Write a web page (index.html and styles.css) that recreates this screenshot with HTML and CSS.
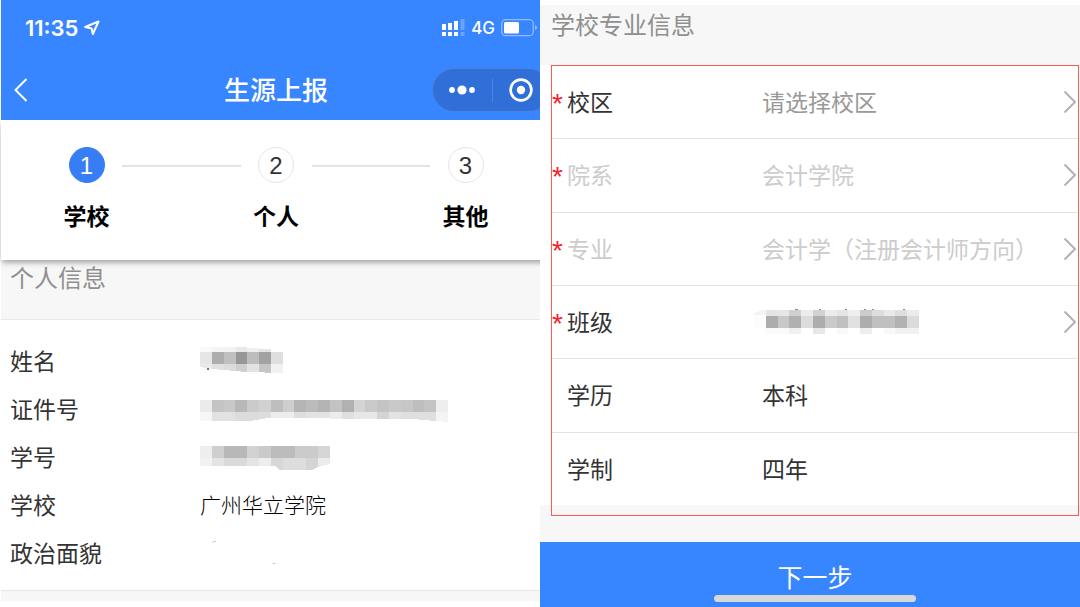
FILE: index.html
```html
<!DOCTYPE html>
<html lang="zh-CN">
<head>
    <meta charset="UTF-8">
    <meta name="viewport" content="width=device-width, initial-scale=1.0">
    <title>生源上报</title>
    <link rel="stylesheet" href="styles.css">
</head>
<body>
    <main class="panel panel-left">
        <div class="screen">
            <header class="topbar">
                <div class="status">
                    <span class="time">11:35</span>
                    <svg class="location" width="16" height="16" viewBox="0 0 16 16">
                        <path d="M1.2 7 L14.5 1.5 L8.8 14 L7.6 8.4 Z" fill="none" stroke="#fff" stroke-width="2" stroke-linejoin="round"/>
                    </svg>
                    <svg class="signal" width="23" height="18" viewBox="0 0 23 18" fill="#fff">
                        <rect x="0" y="5" width="4" height="6"/>
                        <rect x="6" y="4" width="4" height="7"/>
                        <rect x="12" y="2" width="4" height="9"/>
                        <rect x="0" y="13" width="4" height="4"/>
                        <rect x="6" y="13" width="4" height="4"/>
                        <rect x="12" y="13" width="4" height="4"/>
                        <path d="M18.5 0h4v11h-4zM18.5 13h4v4h-4z" opacity=".25"/>
                    </svg>
                    <span class="network">4G</span>
                    <svg class="battery" width="36" height="18" viewBox="0 0 36 18">
                        <rect x=".7" y=".7" width="31.6" height="16" rx="4" fill="none" stroke="#fff" stroke-opacity=".45" stroke-width="1.3"/>
                        <rect x="3" y="3" width="15" height="11.5" rx="1.5" fill="#fff"/>
                        <path d="M34 6q2 .5 2 2.5t-2 2.5z" fill="#fff" fill-opacity=".45"/>
                    </svg>
                </div>
                <nav class="navbar">
                    <button class="back" type="button" aria-label="返回">
                        <svg width="14" height="24" viewBox="0 0 14 24">
                            <path d="M12.5 1 L1.5 12 L12.5 23" fill="none" stroke="#fff" stroke-width="2"/>
                        </svg>
                    </button>
                    <h1>生源上报</h1>
                    <div class="capsule">
                        <button type="button" aria-label="更多">
                            <svg width="26" height="10" viewBox="0 0 26 10" fill="#fff">
                                <circle cx="3" cy="5" r="2.9"/>
                                <circle cx="13" cy="5" r="4.6"/>
                                <circle cx="23" cy="5" r="2.9"/>
                            </svg>
                        </button>
                        <button type="button" aria-label="关闭">
                            <svg width="24" height="24" viewBox="0 0 24 24">
                                <circle cx="12" cy="12" r="10.4" fill="none" stroke="#fff" stroke-width="2.6"/>
                                <circle cx="12" cy="12" r="4.2" fill="#fff"/>
                            </svg>
                        </button>
                    </div>
                </nav>
            </header>

            <ol class="steps">
                <li class="step active"><span class="num">1</span><span class="name">学校</span></li>
                <li class="line"></li>
                <li class="step"><span class="num">2</span><span class="name">个人</span></li>
                <li class="line"></li>
                <li class="step"><span class="num">3</span><span class="name">其他</span></li>
            </ol>

            <h2 class="section-title">个人信息</h2>

            <dl class="info">
                <dt>姓名</dt>
                <dd>
                    <svg class="mosaic" width="83" height="28" viewBox="0 0 7 28" preserveAspectRatio="none">
                        <path d="M0 1h1v5h-1z" fill="#f9f9f9"/><path d="M1 1h1v5h-1z" fill="#f5f5f5"/><path d="M2 1h1v5h-1z" fill="#f2f2f2"/><path d="M3 1h1v5h-1z" fill="#e9e9e9"/><path d="M4 2h1v4h-1z" fill="#efefef"/><path d="M5 3h1v3h-1z" fill="#e4e4e4"/>
                        <path d="M0 6h1v12h-1z" fill="#e6e6e6"/><path d="M1 6h1v12h-1z" fill="#adadad"/><path d="M2 6h1v12h-1z" fill="#c0c0c0"/><path d="M3 6h1v12h-1z" fill="#979797"/><path d="M4 6h1v12h-1z" fill="#bdbdbd"/><path d="M5 6h1v12h-1z" fill="#a2a2a2"/><path d="M6 6h1v12h-1z" fill="#dfdfdf"/>
                        <path d="M0 18h1v5l-1-2z" fill="#e9e9e9"/><path d="M1 18h1v6l-1-1z" fill="#e1e1e1"/><path d="M2 18h1v7l-1-1z" fill="#dcdcdc"/><path d="M3 18h1v8l-1-1z" fill="#cfcfcf"/><path d="M4 18h1v8h-1z" fill="#e3e3e3"/><path d="M5 18h1v9l-1-1z" fill="#c6c6c6"/><path d="M6 18h1v9h-1z" fill="#f1f1f1"/>
                        <path d="M.6 22h.2v2h-.2z" fill="#777"/>
                    </svg>
                </dd>
                <dt>证件号</dt>
                <dd>
                    <svg class="mosaic" width="248" height="28" viewBox="0 -6 21 28" preserveAspectRatio="none">
                        <path d="M0 0h1v12h-1z" fill="#ebebeb"/><path d="M1 0h1v12h-1z" fill="#c4c4c4"/><path d="M2 0h1v12h-1z" fill="#c8c8c8"/><path d="M3 0h1v12h-1z" fill="#b8b8b8"/><path d="M4 0h1v12h-1z" fill="#cbcbcb"/><path d="M5 0h1v12h-1z" fill="#d1d1d1"/><path d="M6 0h1v12h-1z" fill="#bebebe"/>
                        <path d="M7 0h1v12h-1z" fill="#cecece"/><path d="M8 0h1v12h-1z" fill="#b5b5b5"/><path d="M9 0h1v12h-1z" fill="#bbb"/><path d="M10 0h1v12h-1z" fill="#b4b4b4"/><path d="M11 0h1v12h-1z" fill="#c3c3c3"/><path d="M12 0h1v12h-1z" fill="#b1b1b1"/><path d="M13 0h1v12h-1z" fill="#d4d4d4"/>
                        <path d="M14 0h1v12h-1z" fill="#cacaca"/><path d="M15 0h1v12h-1z" fill="#c4c4c4"/><path d="M16 0h1v12h-1z" fill="#c9c9c9"/><path d="M17 0h1v12h-1z" fill="#c7c7c7"/><path d="M18 0h1v12h-1z" fill="#bebebe"/><path d="M19 0h1v12h-1z" fill="#c3c3c3"/><path d="M20 0h1v12h-1z" fill="#eee"/>
                        <path d="M0 12h1v9h-1z" fill="#f6f6f6"/><path d="M1 12h2v9h-2z" fill="#e2e2e2"/><path d="M3 12h2v8l-1 1h-1z" fill="#dcdcdc"/><path d="M5 12h1v6l-1 1z" fill="#ddd"/><path d="M6 12h2v6h-2z" fill="#ededed"/><path d="M8 12h1v6h-1z" fill="#dedede"/><path d="M9 12h2v6h-2z" fill="#e3e3e3"/>
                        <path d="M11 12h1v7h-1z" fill="#ececec"/><path d="M12 12h1v7h-1z" fill="#dfdfdf"/><path d="M13 12h2v7h-2z" fill="#e7e7e7"/><path d="M15 12h1v7h-1z" fill="#d4d4d4"/><path d="M16 12h1v7h-1z" fill="#e3e3e3"/><path d="M17 12h3v9l-2-2h-1z" fill="#dfdfdf"/><path d="M20 12h1v10l-1-1z" fill="#f4f4f4"/>
                    </svg>
                </dd>
                <dt>学号</dt>
                <dd>
                    <svg class="mosaic" width="130" height="28" viewBox="0 -4 11 28" preserveAspectRatio="none">
                        <path d="M0 0h1v12h-1z" fill="#eee"/><path d="M1 0h1v12h-1z" fill="#cfcfcf"/><path d="M2 0h2v12h-2z" fill="#b8b8b8"/><path d="M4 0h1v12h-1z" fill="#d2d2d2"/><path d="M5 0h1v12h-1z" fill="#cacaca"/><path d="M6 0h2v12h-2z" fill="#bcbcbc"/><path d="M8 0h2v12h-2z" fill="#cbcbcb"/><path d="M10 0h1v12h-1z" fill="#d5d5d5"/>
                        <path d="M0 12h1v8h-1z" fill="#f1f1f1"/><path d="M1 12h1v8h-1z" fill="#e3e3e3"/><path d="M2 12h2v8h-2z" fill="#dadada"/><path d="M4 12h1v8h-1z" fill="#e4e4e4"/><path d="M5 12h1v8h-1z" fill="#eee"/><path d="M6 12h1v12h-.3l-.3-4h-.4z" fill="#d7d7d7"/><path d="M7 12h2v12h-2z" fill="#ddd"/><path d="M9 12h1v9l-.5 3h-.5z" fill="#d4d4d4"/><path d="M10 12h1v6l-1 3z" fill="#ececec"/>
                    </svg>
                </dd>
                <dt>学校</dt>
                <dd class="school">广州华立学院</dd>
                <dt>政治面貌</dt>
                <dd>
                    <svg class="mosaic" width="76" height="24" viewBox="0 0 76 24" fill="none">
                        <path d="M12 3q1-2 4-1.500" stroke="#ccc"/>
                        <path d="M73 23h2" stroke="#bbb"/>
                    </svg>
                </dd>
            </dl>
            <div class="spacer"></div>
        </div>
    </main>

    <form class="panel panel-right">
        <h2 class="section-title">学校专业信息</h2>
        <div class="fields-area">
            <div class="fields">
                <div class="field">
                    <label for="campus"><span class="star">*</span>校区</label>
                    <select id="campus" class="hint"><option>请选择校区</option></select>
                    <svg class="arrow" width="14" height="24" viewBox="0 0 14 24"><path d="M1.500 1.500 L12 12 L1.500 22.500"/></svg>
                </div>
                <div class="field off">
                    <label for="college"><span class="star">*</span>院系</label>
                    <select id="college" disabled><option>会计学院</option></select>
                    <svg class="arrow" width="14" height="24" viewBox="0 0 14 24"><path d="M1.500 1.500 L12 12 L1.500 22.500"/></svg>
                </div>
                <div class="field off">
                    <label for="major"><span class="star">*</span>专业</label>
                    <select id="major" disabled><option>会计学（注册会计师方向）</option></select>
                    <svg class="arrow" width="14" height="24" viewBox="0 0 14 24"><path d="M1.500 1.500 L12 12 L1.500 22.500"/></svg>
                </div>
                <div class="field">
                    <label for="class"><span class="star">*</span>班级</label>
                    <button id="class" class="picker" type="button">
                        <svg class="mosaic" width="165" height="26" viewBox="0 0 14 26" preserveAspectRatio="none">
                            <path d="M0 7q.2-5 1-5v5z" fill="#f3f3f3"/><path d="M1 2h1v6h-1z" fill="#e4e4e4"/><path d="M2 2h1v6h-1z" fill="#e6e6e6"/><path d="M3 2h1v6h-1z" fill="#d0d0d0"/><path d="M4 2h1v6h-1z" fill="#ececec"/><path d="M5 2h1v6h-1z" fill="#d2d2d2"/><path d="M6 2h1v6h-1z" fill="#ececec"/><path d="M7 2h1v6h-1z" fill="#e5e5e5"/><path d="M8 2h1v6h-1z" fill="#efefef"/><path d="M9 2h1v6h-1z" fill="#ccc"/><path d="M10 2h1v6h-1z" fill="#ddd"/><path d="M11 2h1v6h-1z" fill="#e9e9e9"/><path d="M12 2h1v6h-1z" fill="#dfdfdf"/><path d="M13 2h1v6h-1z" fill="#ebebeb"/>
                            <path d="M0 8h1v12h-1z" fill="#fcfcfc"/><path d="M1 8h1v12h-1z" fill="#adadad"/><path d="M2 8h1v12h-1z" fill="#c8c8c8"/><path d="M3 8h1v12h-1z" fill="#b0b0b0"/><path d="M4 8h1v12h-1z" fill="#dcdcdc"/><path d="M5 8h1v12h-1z" fill="#adadad"/><path d="M6 8h1v12h-1z" fill="#cacaca"/><path d="M7 8h1v12h-1z" fill="#c0c0c0"/><path d="M8 8h1v12h-1z" fill="#e1e1e1"/><path d="M9 8h1v12h-1z" fill="#adadad"/><path d="M10 8h2v12h-2z" fill="#c0c0c0"/><path d="M12 8h1v12h-1z" fill="#b2b2b2"/><path d="M13 8h1v12h-1z" fill="#dbdbdb"/>
                            <path d="M1 20h2v6h-2z" fill="#fafafa"/><path d="M3 20h1v6h-1z" fill="#f0f0f0"/><path d="M5 20h1v6h-1z" fill="#e8e8e8"/><path d="M7 20h1v6h-1z" fill="#f9f9f9"/><path d="M9 20h1v6h-1z" fill="#eee"/><path d="M11 20h1v6h-1z" fill="#f8f8f8"/><path d="M12 20h2v6h-2z" fill="#f2f2f2"/>
                            <path d="M3.500 1h.2v1h-.2zM5.500 1h.2v1h-.2zM7.700 1h.2v1h-.2zM9.300 1h.2v1h-.2zM10 1h.2v1h-.2zM12.600 1h.2v1h-.2z" fill="#888"/>
                        </svg>
                    </button>
                    <svg class="arrow" width="14" height="24" viewBox="0 0 14 24"><path d="M1.500 1.500 L12 12 L1.500 22.500"/></svg>
                </div>
                <div class="field">
                    <span class="label">学历</span>
                    <span>本科</span>
                </div>
                <div class="field">
                    <span class="label">学制</span>
                    <span>四年</span>
                </div>
            </div>
        </div>
        <button class="next" type="submit">下一步<span class="home-bar"></span></button>
    </form>
</body>
</html>
```

FILE: styles.css
```css
* {
    margin: 0;
    padding: 0;
    box-sizing: border-box;
}

body {
    font-family: "Noto Sans CJK SC", sans-serif;
    font-size: 23px;
    line-height: 32px;
    color: #333;
    background: #fff;
    display: grid;
    grid-template-columns: 1fr 1fr;
    min-height: 100vh;
}

button, select {
    font: inherit;
    color: inherit;
    background: none;
    border: none;
    cursor: pointer;
}

svg {
    display: block;
}

.panel {
    display: flex;
    flex-direction: column;
    overflow: hidden;
}

.panel-left {
    padding: 0 0 6px 1px;
}

/* the phone screen runs a little past the panel edge */
.screen {
    flex: 1;
    display: flex;
    flex-direction: column;
    margin-right: -11px;
}

.topbar {
    position: relative;
    z-index: 2;
    background: #3785ff;
    color: #fff;
}

.status {
    display: flex;
    align-items: center;
    height: 60px;
    padding: 0 14px 4px 24px;
    font-family: Inter, sans-serif;
}

.time {
    font-size: 22px;
    font-weight: 600;
}

.location {
    margin-left: 6px;
}

.signal {
    margin-left: auto;
}

.network {
    margin: 0 6px;
    font-size: 17px;
    font-weight: 500;
}

.navbar {
    display: grid;
    grid-template-columns: 119px 1fr 119px;
    align-items: center;
    height: 60px;
}

.navbar h1 {
    padding-bottom: 2px;
    font-size: 26px;
    font-weight: 500;
    text-align: center;
}

.back {
    justify-self: start;
    padding: 8px 13px;
}

.capsule {
    display: flex;
    height: 44px;
    background: #306fd8;
    border: 1px solid #4a83e0;
    border-radius: 22px;
}

.capsule button {
    flex: 1;
    display: flex;
    align-items: center;
    justify-content: center;
    position: relative;
}

.capsule button + button::before {
    content: "";
    position: absolute;
    left: 0;
    top: 9px;
    bottom: 9px;
    width: 1px;
    background: #4a83e0;
}

.steps {
    display: flex;
    height: 140px;
    padding: 27px 50px 0;
    list-style: none;
    background: #fff;
    box-shadow: 0 3px 6px -1px rgba(0, 0, 0, 0.4);
    z-index: 1;
}

.step {
    width: 71px;
    display: flex;
    flex-direction: column;
    align-items: center;
    gap: 16px;
}

.num {
    width: 36px;
    height: 36px;
    border: 1px solid #e6e6e6;
    border-radius: 50%;
    font-family: "Liberation Sans", sans-serif;
    font-size: 24px;
    line-height: 36px;
    text-align: center;
}

.active .num {
    background: #377ef5;
    border-color: #377ef5;
    color: #fff;
}

.name {
    font-weight: 700;
    color: #000;
}

.line {
    flex: 1;
    height: 2px;
    margin-top: 18px;
    background: #e4e4e4;
}

.section-title {
    height: 60px;
    padding: 1px 9px 0;
    font-size: 24px;
    font-weight: 400;
    color: #8f8f8f;
    background: #f7f7f7;
    border-bottom: 1px solid #e9e9e9;
}

.info {
    display: grid;
    grid-template-columns: 190px 1fr;
    grid-auto-rows: 48px;
    align-items: center;
    padding: 16px 9px 14px;
    border-bottom: 1px solid #e6e6e6;
}

.school {
    font-size: 21px;
    font-weight: 300;
    color: #000;
}

.mosaic {
    shape-rendering: crispEdges;
}

.spacer {
    flex: 1;
    background: #f7f7f7;
}

.panel-right {
    padding-top: 5px;
}

.panel-right .section-title {
    padding: 3px 11px 0;
    border: none;
}

/* white behind the rows, grey under the last one */
.fields-area {
    flex: 1;
    display: flex;
    padding: 0 1px 26px 11px;
    background: linear-gradient(to top, #f7f7f7 37px, #fff 37px);
}

.fields {
    flex: 1;
    display: flex;
    flex-direction: column;
    padding-bottom: 10px;
    border: 1px solid #ff5a52;
}

.field {
    flex: 1;
    display: grid;
    grid-template-columns: 210px 1fr;
    align-items: center;
    position: relative;
    padding-bottom: 2px;
    border-bottom: 1px solid #e3e3e3;
}

.field:last-child {
    border-bottom: none;
}

.field label {
    display: flex;
    align-items: center;
}

.label {
    padding-left: 15px;
}

.star {
    width: 15px;
    padding-top: 6px;
    font-family: "Liberation Sans", sans-serif;
    font-size: 28px;
    color: #f5222d;
}

.field select {
    appearance: none;
    width: 100%;
    height: 48px;
}

.field .hint {
    color: #999;
}

.off, .field select:disabled {
    color: #ccc;
    opacity: 1;
}

.picker {
    justify-self: start;
    margin-left: -8px;
}

.arrow {
    position: absolute;
    right: 1px;
    top: calc(50% - 12px);
    fill: none;
    stroke: #b2b2b2;
    stroke-width: 2;
    pointer-events: none;
}

.next {
    display: flex;
    flex-direction: column;
    align-items: center;
    height: 65px;
    padding: 18px 0 0 10px;
    font-size: 25px;
    color: #fff;
    background: #3785ff;
}

.home-bar {
    width: 202px;
    height: 7px;
    margin-top: 3px;
    border-radius: 4px;
    background: #d8d8d8;
}
```
